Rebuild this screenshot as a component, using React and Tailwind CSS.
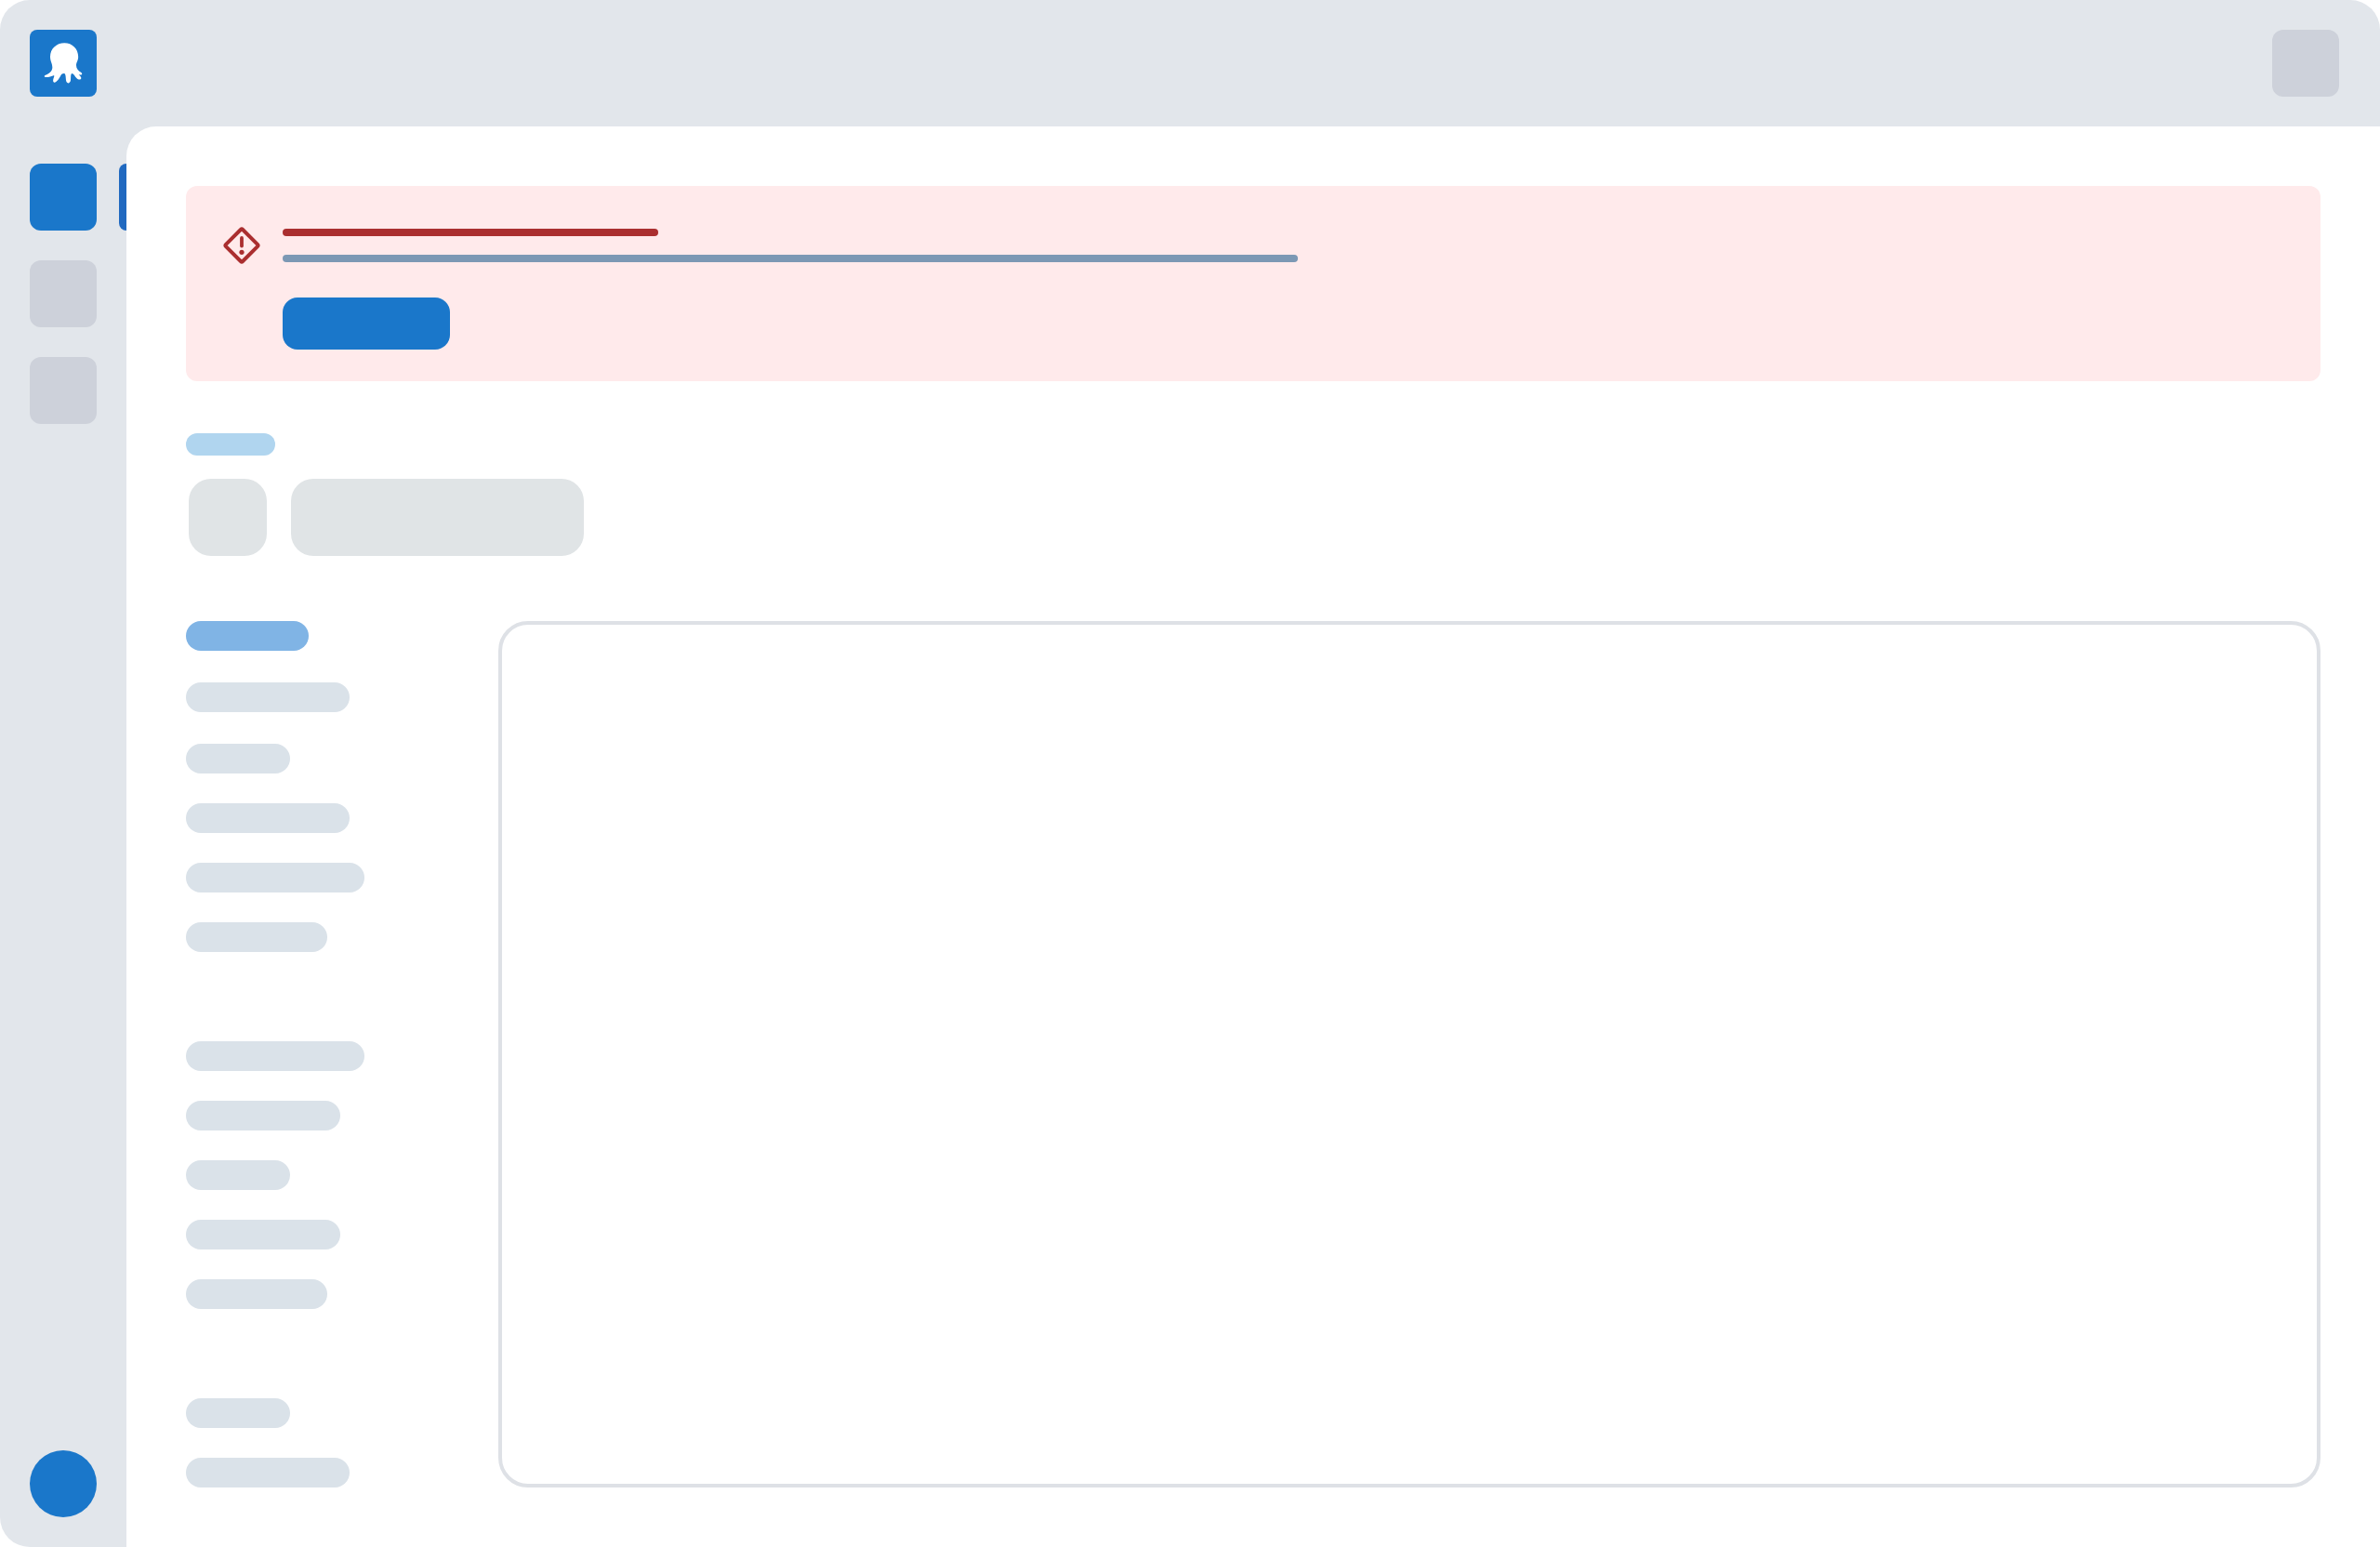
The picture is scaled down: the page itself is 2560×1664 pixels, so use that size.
const navGroups = [
  [
    { width: 'w-[132px]', color: 'bg-[#80b4e5]', gap: 'mb-[34px]' },
    { width: 'w-44', color: 'bg-[#dae2e9]', gap: 'mb-[34px]' },
    { width: 'w-28', color: 'bg-[#dae2e9]', gap: 'mb-8' },
    { width: 'w-44', color: 'bg-[#dae2e9]', gap: 'mb-8' },
    { width: 'w-48', color: 'bg-[#dae2e9]', gap: 'mb-8' },
    { width: 'w-[152px]', color: 'bg-[#dae2e9]', gap: '' },
  ],
  [
    { width: 'w-48', color: 'bg-[#dae2e9]', gap: 'mb-8' },
    { width: 'w-[166px]', color: 'bg-[#dae2e9]', gap: 'mb-8' },
    { width: 'w-28', color: 'bg-[#dae2e9]', gap: 'mb-8' },
    { width: 'w-[166px]', color: 'bg-[#dae2e9]', gap: 'mb-8' },
    { width: 'w-[152px]', color: 'bg-[#dae2e9]', gap: '' },
  ],
  [
    { width: 'w-28', color: 'bg-[#dae2e9]', gap: 'mb-8' },
    { width: 'w-44', color: 'bg-[#dae2e9]', gap: '' },
  ],
];

function Logo() {
  return (
    <div className="size-[72px] overflow-hidden rounded-lg bg-[#1a77ca]">
      <svg viewBox="36 36 216 216" className="size-full" fill="#fff" aria-hidden="true">
        <path d="M148 79C173 79 192.500 98 192.500 123C192.500 136 186 141 186 151C186 162 193 169 201 173C207 177 205 182 200 181.500L194 180.500C198 184 202.500 189 202 193C200 199 192 197 187 192C181 186 178 178 173 177C167 178 169 190 168 199C166 210 158 210 155 205C151 197 154 181 148 177C143 176 139 178 136 184C131 194 122 207 115 206C109 203 112 195 114 189C116 184 115 182 109 185C101 188 92 190 87 189C82 188 82 184 87 182C97 179 109 169 109 158C109 144 102 138 102 123C102 98 122 79 148 79Z" />
      </svg>
    </div>
  );
}

function DangerIcon() {
  return (
    <svg viewBox="0 0 40 40" className="size-10 shrink-0" fill="none" stroke="#aa2e2f" aria-hidden="true">
      <path d="M18.900 3L3 18.900Q1.900 20 3 21.100L18.900 37Q20 38.100 21.100 37L37 21.100Q38.100 20 37 18.900L21.100 3Q20 1.900 18.900 3Z" strokeWidth="4" />
      <path d="M20 11.900V20.500" strokeWidth="3.800" strokeLinecap="round" />
      <circle cx="20" cy="27.300" r="2.600" fill="#aa2e2f" stroke="none" />
    </svg>
  );
}

function Sidebar() {
  return (
    <aside className="flex w-[136px] shrink-0 flex-col justify-between pt-10 pb-8">
      <div className="flex flex-col gap-8">
        <div className="flex justify-between pl-8">
          <div className="size-[72px] rounded-xl bg-[#1a77ca]" />
          <div className="h-[72px] w-2 rounded-l-lg bg-[#2069c0]" />
        </div>
        <div className="ml-8 size-[72px] rounded-xl bg-[#cdd1da]" />
        <div className="ml-8 size-[72px] rounded-xl bg-[#cdd1da]" />
      </div>
      <div className="ml-8 size-[72px] rounded-full bg-[#1a77ca]" />
    </aside>
  );
}

function Banner() {
  return (
    <section className="flex h-[210px] gap-6 rounded-xl bg-[#ffeaeb] pt-11 pl-10">
      <DangerIcon />
      <div className="flex flex-col pt-0.5">
        <div className="h-2 w-[404px] rounded-full bg-[#aa2e2f]" />
        <div className="mt-5 h-2 w-[1092px] rounded-full bg-[#7c98b4]" />
        <div className="mt-[38px] h-14 w-[180px] rounded-2xl bg-[#1a77ca]" />
      </div>
    </section>
  );
}

export default function App() {
  return (
    <div className="h-[1664px] w-[2560px] overflow-hidden bg-white">
      <div className="flex h-full flex-col rounded-l-[32px] rounded-tr-[32px] bg-[#e2e6eb]">
        <header className="flex h-[136px] shrink-0 items-start justify-between pt-8 pr-11 pl-8">
          <Logo />
          <div className="size-[72px] rounded-xl bg-[#cdd1da]" />
        </header>
        <div className="flex min-h-0 flex-1">
          <Sidebar />
          <main className="flex min-w-0 flex-1 flex-col rounded-tl-[32px] bg-white p-16">
            <Banner />
            <div className="mt-14 h-6 w-24 rounded-full bg-[#b0d5ef]" />
            <div className="mt-[25px] ml-[3px] flex">
              <div className="h-[83px] w-[84px] rounded-3xl bg-[#e0e4e6]" />
              <div className="ml-[25.5px] h-[83px] w-[315.5px] rounded-3xl bg-[#e0e4e6]" />
            </div>
            <div className="mt-[70px] flex min-h-0 flex-1">
              <nav className="flex w-[336px] shrink-0 flex-col gap-24">
                {navGroups.map((items, group) => (
                  <div key={group} className="flex flex-col">
                    {items.map((item, i) => (
                      <div key={i} className={`h-8 rounded-full ${item.width} ${item.color} ${item.gap}`} />
                    ))}
                  </div>
                ))}
              </nav>
              <section className="flex-1 rounded-[32px] border-4 border-[#dee1e6]" />
            </div>
          </main>
        </div>
      </div>
    </div>
  );
}
